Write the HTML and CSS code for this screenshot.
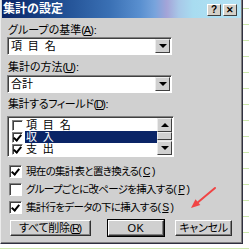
FILE: index.html
```html
<!DOCTYPE html>
<html lang="ja">
<head>
<meta charset="utf-8">
<title>集計の設定</title>
<link rel="stylesheet" href="styles.css">
</head>
<body>
<div class="sheet">
  <div class="dialog">
    <div class="titlebar">
      <span class="title">集計の設定</span>
      <div class="tbtns">
        <span class="tbtn">?</span>
        <span class="tbtn x">✕</span>
      </div>
    </div>
    <div class="content">
      <div class="label l1">グループの基準(<u>A</u>):</div>
      <div class="combo c1">
        <span class="val spaced">項 目 名</span>
        <span class="drop"><i class="tri down"></i></span>
      </div>
      <div class="label l2">集計の方法(<u>U</u>):</div>
      <div class="combo c2">
        <span class="val">合計</span>
        <span class="drop"><i class="tri down"></i></span>
      </div>
      <div class="label l3">集計するフィールド(<u>D</u>):</div>
      <div class="listbox">
        <div class="rows">
          <div class="row"><span class="cb"></span><span class="item spaced">項 目 名</span></div>
          <div class="row sel"><span class="cb on"></span><span class="item spaced seltext">収 入</span></div>
          <div class="row"><span class="cb on"></span><span class="item spaced">支 出</span></div>
        </div>
        <div class="vscroll">
          <span class="sbtn"><i class="tri up"></i></span>
          <span class="thumb"></span>
          <span class="track"></span>
          <span class="sbtn"><i class="tri down"></i></span>
        </div>
      </div>
      <div class="opts">
        <div class="opt"><span class="cb on"></span>現在の集計表と置き換える(<u>C</u>)</div>
        <div class="opt"><span class="cb"></span>グループごとに改ページを挿入する(<u>P</u>)</div>
        <div class="opt"><span class="cb on"></span>集計行をデータの下に挿入する(<u>S</u>)</div>
      </div>
      <div class="buttons">
        <span class="btn wide">すべて削除(<u>R</u>)</span>
        <span class="btn ok">OK</span>
        <span class="btn cancel">キャンセル</span>
      </div>
    </div>
  </div>
  <svg class="arrow" width="32" height="28" viewBox="0 0 32 28">
    <path d="M27 4 L10 18.2" stroke="#f04444" stroke-width="2" fill="none" stroke-linecap="round"/>
    <path d="M3 24 L7.5 15.3 L12.3 21.1 Z" fill="#f04444"/>
  </svg>
</div>
</body>
</html>
```
FILE: styles.css
```css
html, body {
  margin: 0;
  padding: 0;
}
body {
  width: 249px;
  height: 252px;
  overflow: hidden;
  background: #ffffff;
  font-family: "Liberation Sans", "Noto Sans CJK JP", sans-serif;
  font-feature-settings: "palt";
  font-size: 11px;
  color: #000;
}
.sheet {
  position: relative;
  width: 249px;
  height: 252px;
  background:
    repeating-linear-gradient(to bottom, transparent 0, transparent 8px, #cfe9b0 8px, #cfe9b0 9px, transparent 9px, transparent 16px);
}
.dialog {
  width: 243px;
  height: 244px;
  box-sizing: border-box;
  background: #d0d0d0;
  border-right: 1px solid #303040;
  border-bottom: 1px solid #303040;
  border-left: 1px solid #ececec;
  box-shadow: inset -1px -1px 0 #808080;
  display: flex;
  flex-direction: column;
}
.titlebar {
  height: 18px;
  flex: none;
  margin: 0 1px 0 1px;
  display: flex;
  align-items: center;
  justify-content: space-between;
  padding: 0 4px 0 1px;
  background: linear-gradient(to right, #0a2466 0%, #1d4a8e 22%, #3a70b4 45%, #5a90d0 58%, #78a4dc 64%, #a4a4d8 69%, #a8c8e8 74%, #a8dcf0 80%, #b4e2f4 100%);
}
.title {
  color: #fff;
  font-weight: bold;
  font-size: 12px;
  line-height: 18px;
  letter-spacing: 0;
  font-feature-settings: normal;
}
.tbtns {
  display: flex;
  gap: 2px;
  margin-top: 1px;
}
.tbtn {
  width: 14px;
  height: 12px;
  box-sizing: border-box;
  background: #d4d0c8;
  border: 1px solid;
  border-color: #fff #404040 #404040 #fff;
  font-family: "Liberation Sans", sans-serif;
  font-weight: bold;
  font-size: 10px;
  line-height: 10px;
  text-align: center;
  color: #000;
}
.tbtn.x { font-size: 9px; }
.content {
  padding: 5px 0 0 6px;
  display: flex;
  flex-direction: column;
}
.label {
  height: 14px;
  line-height: 14px;
  padding-left: 1px;
}
.l1 { margin-bottom: 0; }
.l2 { margin-bottom: 1px; }
.l3 { margin-bottom: 5px; letter-spacing: -0.4px; }
u {
  text-decoration: underline;
  text-underline-offset: 1px;
  margin: 0 -1px;
}
.combo {
  width: 165px;
  height: 18px;
  box-sizing: border-box;
  background: #fff;
  border: 1px solid;
  border-color: #808080 #fff #fff #808080;
  box-shadow: inset 1px 1px 0 #404040;
  display: flex;
  align-items: center;
  justify-content: space-between;
  padding: 1px 1px 1px 3px;
}
.c1 { margin-bottom: 5px; }
.c2 { margin-bottom: 4px; }
.val {
  font-size: 11px;
  line-height: 14px;
}
.spaced {
  letter-spacing: 1.4px;
  font-feature-settings: normal;
}
.drop, .sbtn {
  width: 15px;
  height: 14px;
  box-sizing: border-box;
  background: #d0d0d0;
  border: 1px solid;
  border-color: #ececec #404040 #404040 #ececec;
  display: flex;
  align-items: center;
  justify-content: center;
  flex: none;
}
.tri {
  width: 0;
  height: 0;
  border-left: 4px solid transparent;
  border-right: 4px solid transparent;
}
.tri.down { border-top: 4px solid #000; }
.tri.up { border-bottom: 4px solid #000; }
.listbox {
  width: 167px;
  height: 41px;
  box-sizing: border-box;
  background: #fff;
  border: 1px solid;
  border-color: #808080 #fff #fff #808080;
  box-shadow: inset 1px 1px 0 #404040;
  display: flex;
  padding: 1px 1px 1px 1px;
  margin-bottom: 8px;
}
.rows {
  flex: 1;
  display: flex;
  flex-direction: column;
  padding-top: 1px;
  overflow: hidden;
}
.row {
  height: 12px;
  display: flex;
  align-items: center;
  gap: 2px;
  padding-left: 3px;
}
.row .cb {
  width: 11px;
  height: 11px;
}
.row .cb.on::after {
  left: 1px;
  top: 0;
}
.item {
  font-size: 11px;
  line-height: 12px;
  height: 12px;
  padding-left: 1px;
}
.row.sel .seltext {
  background: #0a2466;
  color: #fff;
  flex: 1;
}
.vscroll {
  width: 15px;
  display: flex;
  flex-direction: column;
  flex: none;
}
.thumb {
  background: #d0d0d0;
  border: 1px solid;
  border-color: #ececec #404040 #404040 #ececec;
  box-sizing: border-box;
  height: 8px;
}
.track {
  flex: 1;
  background: #e4e4e4;
}
.cb {
  width: 13px;
  height: 13px;
  box-sizing: border-box;
  flex: none;
  background: #fff;
  border: 1px solid;
  border-color: #808080 #fff #fff #808080;
  box-shadow: inset 1px 1px 0 #404040;
  position: relative;
}
.cb.on::after {
  content: "";
  position: absolute;
  left: 2px;
  top: 1px;
  width: 3px;
  height: 6px;
  border: solid #000;
  border-width: 0 2px 2px 0;
  transform: translate(1px, 0) rotate(40deg);
}
.opts {
  display: flex;
  flex-direction: column;
  gap: 5px;
  padding-left: 2px;
}
.opt {
  height: 13px;
  display: flex;
  align-items: center;
  gap: 3px;
  line-height: 13px;
  font-size: 10.5px;
  letter-spacing: -0.7px;
}
.opt .cb {
  margin-right: 1px;
}
.buttons {
  display: flex;
  margin-top: 6px;
  padding-left: 3px;
}
.btn {
  height: 16px;
  box-sizing: border-box;
  border: 1px solid;
  border-color: #fff #303030 #303030 #fff;
  box-shadow: inset -1px -1px 0 #808080;
  background: #d0d0d0;
  display: flex;
  align-items: center;
  justify-content: center;
  line-height: 14px;
  letter-spacing: -0.3px;
}
.btn.wide {
  width: 81px;
  margin-right: 17px;
}
.btn.ok {
  width: 56px;
  margin-right: 11px;
  outline: 1px solid #000;
  font-size: 11px;
  letter-spacing: 0.5px;
}
.btn.cancel {
  width: 57px;
}
.arrow {
  position: absolute;
  left: 188px;
  top: 184px;
}
```
